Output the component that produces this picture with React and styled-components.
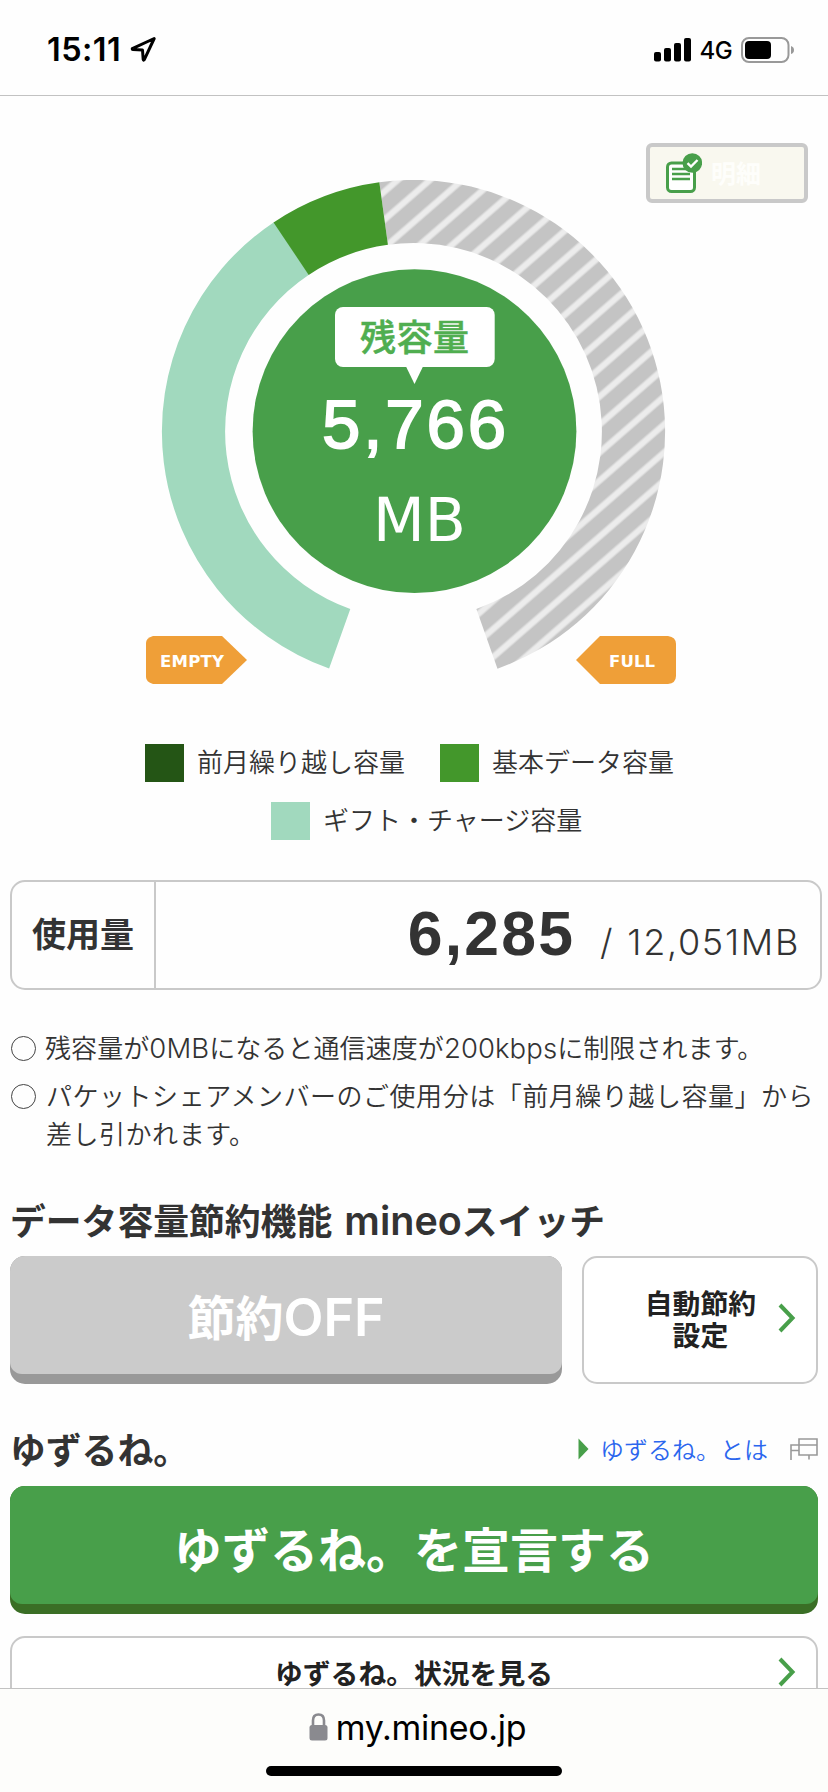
import React from "react";
import styled, { createGlobalStyle } from "styled-components";

const GREEN = "#489f4a";
const LINE = "#c9c9c9";
const CJK = `"Noto Sans CJK JP", sans-serif`;

const GlobalStyle = createGlobalStyle`
  * { box-sizing: border-box; }
  body { margin: 0; background: #fff; }
  button { margin: 0; padding: 0; font: inherit; color: inherit; cursor: pointer; }
`;

const Screen = styled.div`
  display: flex;
  flex-direction: column;
  width: 828px;
  height: 1792px;
  overflow: hidden;
  background: #fefefe;
  color: #333;
  font-family: ${CJK};
`;

const StatusBar = styled.header`
  display: flex;
  flex: none;
  align-items: center;
  justify-content: space-between;
  height: 96px;
  padding: 4px 33px 0 47px;
  border-bottom: 1px solid #c2c2c2;
  color: #000;
  font-family: Inter, sans-serif;
`;

const StatusGroup = styled.div`
  display: flex;
  align-items: center;
  gap: ${(p) => p.$gap}px;
`;

const Time = styled.span`
  padding-top: 1px;
  font-size: 32.5px;
  font-weight: 600;
  line-height: 40px;
  letter-spacing: 0.4px;
`;

const Network = styled.span`
  font-size: 24px;
  font-weight: 500;
  line-height: 30px;
  letter-spacing: -0.6px;
  padding-top: 2px;
`;

const Content = styled.main`
  position: relative;
  flex: 1;
  min-height: 0;
  overflow: hidden;
  padding: 84px 10px 0;
`;

const DetailButton = styled.button`
  position: absolute;
  top: 47px;
  right: 20px;
  display: flex;
  align-items: center;
  gap: 9px;
  width: 162px;
  height: 60px;
  padding: 0 0 0 16px !important;
  border: 4px solid #c9c9c9;
  border-radius: 6px;
  background: #f9f8ef;
  color: #fefefb !important;
  font-family: ${CJK};
  font-size: 25px !important;
  font-weight: 700 !important;
`;

const DetailLabel = styled.span`
  padding-bottom: 3px;
`;

const Gauge = styled.svg`
  display: block;
  width: 532px;
  height: 504px;
  margin-left: 136px;
`;

const Legend = styled.ul`
  display: flex;
  flex-direction: column;
  gap: 20px;
  margin: 60px 0 0;
  padding: 0;
  list-style: none;
`;

const LegendRow = styled.li`
  display: flex;
  gap: 35px;
  padding-left: ${(p) => p.$indent}px;
`;

const LegendItem = styled.span`
  display: flex;
  gap: 13px;
  height: 38px;
  font-size: 26px;
  font-weight: 350;
  line-height: 33px;
  white-space: nowrap;
`;

const Swatch = styled.i`
  width: 39px;
  height: 38px;
  background: ${(p) => p.$color};
`;

const Usage = styled.section`
  display: flex;
  width: 812px;
  height: 110px;
  margin-top: 40px;
  border: 2px solid ${LINE};
  border-radius: 15px;
`;

const UsageLabel = styled.div`
  display: flex;
  align-items: center;
  width: 144px;
  padding: 0 0 6px 20px;
  border-right: 2px solid ${LINE};
  font-size: 34px;
  font-weight: 700;
`;

const UsageValue = styled.div`
  display: flex;
  flex: 1;
  align-items: baseline;
  justify-content: flex-end;
  padding: 15px 20px 0 0;
  line-height: 72px;
  white-space: pre;
`;

const Used = styled.strong`
  font-family: "Liberation Sans", sans-serif;
  font-size: 62.5px;
  font-weight: 700;
  letter-spacing: 2.2px;
`;

const Total = styled.span`
  margin-left: ${(p) => p.$gap}px;
  font-family: Inter, sans-serif;
  font-size: 36px;
  font-weight: 300;
  letter-spacing: 1.7px;
`;

const Latin = styled.span`
  font-family: Inter, sans-serif;
  font-size: ${(p) => p.$size}px;
  font-weight: ${(p) => p.$weight || 300};
  line-height: 0;
`;

const Notes = styled.ul`
  display: flex;
  flex-direction: column;
  gap: 10px;
  margin: 38px 0 0;
  padding: 0;
  list-style: none;
`;

const Note = styled.li`
  display: flex;
  gap: ${(p) => p.$gap}px;
  font-size: 26px;
  font-weight: 350;
  line-height: 38px;
  letter-spacing: ${(p) => p.$tracking}px;
  white-space: nowrap;

  &::before {
    content: "";
    flex: none;
    width: 23px;
    height: 23px;
    margin: 8px 0 0 1px;
    border: 1.3px solid #444;
    border-radius: 50%;
  }
`;

const Heading = styled.h2`
  margin: 0;
  font-size: 35.8px;
  font-weight: 700;
  line-height: 46px;
  padding-bottom: 2px;
  white-space: nowrap;
`;

const SwitchHeading = styled(Heading)`
  margin-top: 44px;
  word-spacing: 4px;
`;

const SwitchRow = styled.div`
  display: flex;
  gap: 20px;
  margin-top: 12px;
`;

const SolidButton = styled.button`
  display: flex;
  align-items: center;
  justify-content: center;
  width: ${(p) => p.$width}px;
  height: 128px;
  border: 0;
  border-radius: 15px;
  background: ${(p) => p.$shade};
  overflow: hidden;
`;

const ButtonFace = styled.span`
  display: flex;
  align-self: flex-start;
  align-items: center;
  justify-content: center;
  width: 100%;
  height: 118px;
  padding-top: 3px;
  border-radius: 0 0 12px 12px;
  background: ${(p) => p.$color};
  color: #fff;
  font-family: ${CJK};
  font-size: 48px;
  font-weight: 700;
  white-space: nowrap;
`;

const SwitchLabel = styled.span`
  padding-bottom: 3px;
`;

const OutlineButton = styled.button`
  display: flex;
  align-items: center;
  justify-content: flex-end;
  width: ${(p) => p.$width}px;
  height: ${(p) => p.$height}px;
  padding: 0 20px 4px 0 !important;
  border: 2px solid ${LINE};
  border-radius: 15px;
  background: #fff;
  color: #222 !important;
  font-family: ${CJK};
  font-size: 27.8px !important;
  font-weight: 700 !important;
  line-height: 32px !important;
`;

const OutlineLabel = styled.span`
  margin-right: ${(p) => p.$gap}px;
  text-align: center;
  white-space: pre;
`;

const YuzuruneHeader = styled.div`
  display: flex;
  align-items: center;
  justify-content: space-between;
  height: 48px;
  margin-top: 41px;
`;

const HelpLink = styled.a`
  display: flex;
  align-items: center;
  color: #2b66ee;
  font-size: 24px;
  font-weight: 350;
  line-height: 32px;
`;

const LinkText = styled.span`
  margin: 0 22px 0 11px;
`;

const Declare = styled.div`
  margin: 13px 0 22px;
`;

const AddressBar = styled.footer`
  display: flex;
  flex: none;
  flex-direction: column;
  align-items: center;
  height: 104px;
  padding-top: 16px;
  border-top: 1px solid #c2c2c2;
  background: #fdfdfb;
`;

const Address = styled.div`
  display: flex;
  align-items: center;
  gap: 8px;
  height: 44px;
  padding-left: 7px;
  color: #000;
  font-family: Inter, sans-serif;
  font-size: 34px;
  letter-spacing: -0.3px;
`;

const HomeIndicator = styled.div`
  width: 296px;
  height: 10px;
  margin-top: 17px;
  border-radius: 5px;
  background: #000;
`;

const Chevron = () => (
  <svg width="18" height="30" viewBox="0 0 18 30">
    <path d="M2 2 L14.5 15 L2 28" fill="none" stroke={GREEN} strokeWidth="4" />
  </svg>
);

const DocumentIcon = () => (
  <svg width="36" height="40" viewBox="0 0 36 40">
    <rect x="1.5" y="10" width="27" height="28.5" rx="4" fill="#fff" stroke={GREEN} strokeWidth="3" />
    <path d="M6 16H24M6 21H24M6 26H24" stroke={GREEN} strokeWidth="2.6" />
    <circle cx="26.3" cy="10" r="9.8" fill={GREEN} />
    <path d="M21.5 10.2L25 13.5L31.5 7" fill="none" stroke="#fff" strokeWidth="2.4" />
  </svg>
);

const LocationIcon = () => (
  <svg width="27" height="27" viewBox="0 0 27 27">
    <path d="M24.2 2.5L2.3 12.6Q2 13.4 3 13.5L12.5 14L13.2 23.5Q13.5 24.8 14.3 23.7Z" fill="none" stroke="#000" strokeWidth="3" strokeLinejoin="round" />
  </svg>
);

const SignalIcon = () => (
  <svg width="37" height="24" viewBox="0 0 37 24">
    <rect x="0" y="14" width="7" height="9.5" rx="2" />
    <rect x="10" y="10" width="7" height="13.5" rx="2" />
    <rect x="20" y="5" width="7" height="18.5" rx="2" />
    <rect x="30" y="0" width="7" height="23.5" rx="2" />
  </svg>
);

const BatteryIcon = () => (
  <svg width="54" height="26" viewBox="0 0 54 26">
    <rect x="1" y="1" width="46.5" height="24" rx="7" fill="none" stroke="#999" strokeWidth="2" />
    <rect x="4" y="4" width="26" height="18" rx="4" />
    <path d="M50 9Q53 10 53 13T50 17Z" fill="#999" />
  </svg>
);

const WindowsIcon = () => (
  <svg width="28" height="22" viewBox="0 0 28 22">
    <path d="M9 1H27V17H9ZM9 7H27M1 22V7H9M1 12.5H9M19 17V21.5" fill="none" stroke="#999" strokeWidth="1.6" />
  </svg>
);

const LockIcon = () => (
  <svg width="19" height="28" viewBox="0 0 19 28">
    <rect x="0.5" y="12" width="18" height="15.5" rx="2.5" fill="#8a8a8f" />
    <path d="M4 13V7.5Q4 1.5 9.5 1.5T15 7.5V13" fill="none" stroke="#8a8a8f" strokeWidth="2.6" />
  </svg>
);

const CENTER = { x: 413.5, y: 431.5 };
const OUTER = 251.6;
const INNER = 188.4;

function polar(radius, degrees) {
  const a = (degrees * Math.PI) / 180;
  return `${(CENTER.x + radius * Math.sin(a)).toFixed(2)} ${(CENTER.y - radius * Math.cos(a)).toFixed(2)}`;
}

// Ring segment running clockwise; angles are measured from twelve o'clock.
function segment(from, to) {
  const large = to - from > 180 ? 1 : 0;
  return `M${polar(OUTER, from)}A${OUTER} ${OUTER} 0 ${large} 1 ${polar(OUTER, to)}L${polar(INNER, to)}A${INNER} ${INNER} 0 ${large} 0 ${polar(INNER, from)}Z`;
}

function DataGauge() {
  return (
    <Gauge viewBox="146 180 532 504">
      <defs>
        <pattern id="hatch" width="40" height="21.13" patternUnits="userSpaceOnUse" patternTransform="translate(400 206) rotate(-41) translate(0 -10.56)">
          <rect width="40" height="21.13" fill="#c4c4c4" />
          <rect y="6.9" width="40" height="7.4" fill="#d6d6d6" />
          <rect y="8" width="40" height="5.2" fill="#ececec" />
        </pattern>
      </defs>
      <path d={segment(-7.8, 160.5)} fill="url(#hatch)" />
      <path d={segment(199.6, 326.3)} fill="#a1d9be" />
      <path d={segment(326.2, 352.2)} fill="#43972b" />
      <circle cx="414.5" cy="431.2" r="161.9" fill={GREEN} />
      <rect x="335" y="307" width="159.7" height="60" rx="8" fill="#fff" />
      <path d="M406 366.5H423L414.5 384Z" fill="#fff" />
      <text x="360" y="350.5" fontFamily="Noto Sans CJK JP" fontSize="36" fontWeight="500" fill="#50ae50" stroke="#50ae50" strokeWidth="0.5" textLength="109">残容量</text>
      <text x="322" y="448" fontFamily="Liberation Sans" fontSize="69" fill="#fff" stroke="#fff" strokeWidth="1.8" textLength="184">5,766</text>
      <text x="373" y="541" fontFamily="DejaVu Sans" fontSize="60" fill="#fff">MB</text>
      <path d="M153 636H222L247 660L222 684H153Q146 682 146 677V643Q146 638 153 636Z" fill="#ef9f38" />
      <path d="M600 636H668Q676 637 676 644V676Q676 683 668 684H600L576 660Z" fill="#ef9f38" />
      <text x="160" y="666.5" fontFamily="DejaVu Sans" fontSize="16.5" fontWeight="700" fill="#fff" textLength="64">EMPTY</text>
      <text x="609" y="666.5" fontFamily="DejaVu Sans" fontSize="16.5" fontWeight="700" fill="#fff" textLength="46">FULL</text>
    </Gauge>
  );
}

export default function App() {
  return (
    <Screen>
      <GlobalStyle />
      <StatusBar>
        <StatusGroup $gap={9}>
          <Time>15:11</Time>
          <LocationIcon />
        </StatusGroup>
        <StatusGroup $gap={9}>
          <SignalIcon />
          <Network>4G</Network>
          <BatteryIcon />
        </StatusGroup>
      </StatusBar>

      <Content>
        <DetailButton>
          <DocumentIcon />
          <DetailLabel>明細</DetailLabel>
        </DetailButton>
        <DataGauge />
        <Legend>
          <LegendRow $indent={135}>
            <LegendItem><Swatch $color="#245515" />前月繰り越し容量</LegendItem>
            <LegendItem><Swatch $color="#43972b" />基本データ容量</LegendItem>
          </LegendRow>
          <LegendRow $indent={261}>
            <LegendItem><Swatch $color="#a1d9be" />ギフト・チャージ容量</LegendItem>
          </LegendRow>
        </Legend>

        <Usage>
          <UsageLabel>使用量</UsageLabel>
          <UsageValue>
            <Used>6,285</Used>
            <Total $gap={25}>/</Total>
            <Total $gap={13}>12,051MB</Total>
          </UsageValue>
        </Usage>

        <Notes>
          <Note $gap={9} $tracking={0.08}>
            <span>残容量が<Latin $size={27.5}>0MB</Latin>になると通信速度が<Latin $size={27.5}>200kbps</Latin>に制限されます。</span>
          </Note>
          <Note $gap={10} $tracking={0.53}>
            <span>パケットシェアメンバーのご使用分は「前月繰り越し容量」から<br />差し引かれます。</span>
          </Note>
        </Notes>

        <SwitchHeading>データ容量節約機能 <Latin $size={39.5} $weight={600}>mineo</Latin>スイッチ</SwitchHeading>
        <SwitchRow>
          <SolidButton $width={552} $shade="#999">
            <ButtonFace $color="#cbcbcb">
              <SwitchLabel>節約<Latin $size={52} $weight={600}>OFF</Latin></SwitchLabel>
            </ButtonFace>
          </SolidButton>
          <OutlineButton $width={236} $height={128}>
            <OutlineLabel $gap={22}>{"自動節約\n設定"}</OutlineLabel>
            <Chevron />
          </OutlineButton>
        </SwitchRow>

        <YuzuruneHeader>
          <Heading>ゆずるね。</Heading>
          <HelpLink>
            <svg width="11" height="22" viewBox="0 0 11 22"><path d="M0.5 0.5L10.5 11L0.5 21.5Z" fill={GREEN} /></svg>
            <LinkText>ゆずるね。とは</LinkText>
            <WindowsIcon />
          </HelpLink>
        </YuzuruneHeader>
        <Declare>
          <SolidButton $width={808} $shade="#3a6e25">
            <ButtonFace $color={GREEN}>ゆずるね。を宣言する</ButtonFace>
          </SolidButton>
        </Declare>
        <OutlineButton $width={808} $height={76}>
          <OutlineLabel $gap={225}>ゆずるね。状況を見る</OutlineLabel>
          <Chevron />
        </OutlineButton>
      </Content>

      <AddressBar>
        <Address>
          <LockIcon />
          my.mineo.jp
        </Address>
        <HomeIndicator />
      </AddressBar>
    </Screen>
  );
}
